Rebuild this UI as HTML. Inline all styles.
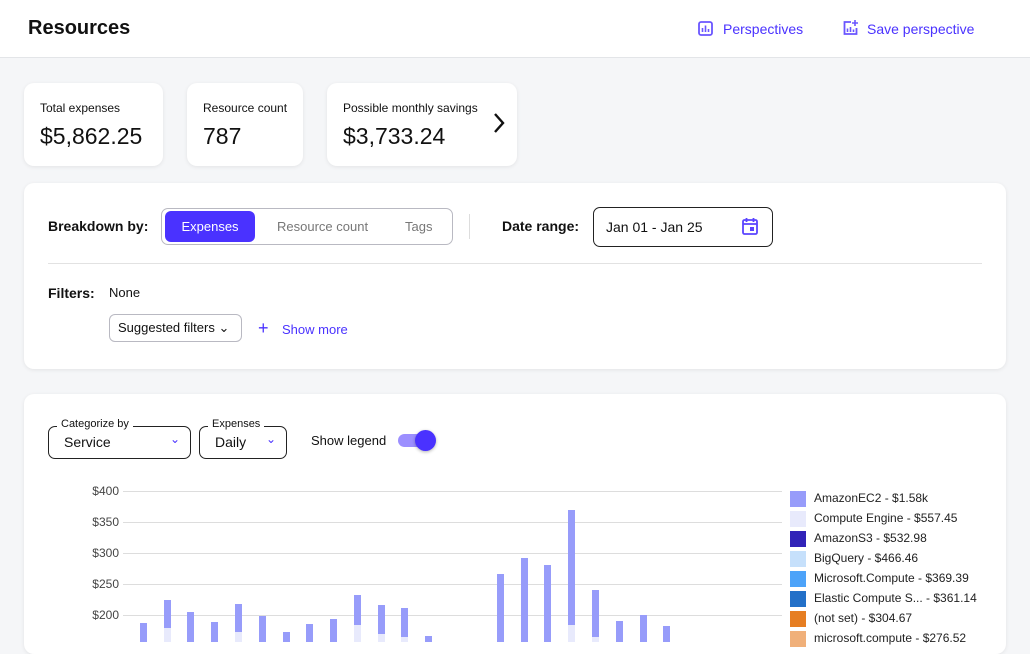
<!DOCTYPE html>
<html><head><meta charset="utf-8"><style>
*{box-sizing:border-box;margin:0;padding:0}
body{width:1030px;height:642px;overflow:hidden;background:#f5f6f8;font-family:"Liberation Sans",sans-serif;color:#111;position:relative}
.a{position:absolute}
.card{position:absolute;background:#fff;border-radius:10px;box-shadow:0 1px 4px rgba(0,0,0,.08)}
.p{color:#4a32ff}
.lg{position:absolute;left:790px;font-size:12px;color:#222}
.lg i{position:absolute;left:0;top:-7px;width:16px;height:16px}
.lg span{position:absolute;left:24px;top:-7px;white-space:nowrap}
</style></head><body>
<div class="a" style="left:0;top:0;width:1030px;height:58px;background:#fff;border-bottom:1px solid #e3e5e8"></div>
<div class="a" style="left:28px;top:17px;font-size:20px;font-weight:bold">Resources</div>
<svg class="a" style="left:698px;top:21px" width="15" height="15" viewBox="0 0 15 15"><rect x="1" y="1" width="13" height="13" rx="2" fill="none" stroke="#6a55ff" stroke-width="1.8"/><path d="M4.5 11V7M7.5 11V4.5M10.5 11V8" stroke="#6a55ff" stroke-width="1.6"/></svg>
<div class="a p" style="left:723px;top:21px;font-size:14px">Perspectives</div>
<svg class="a" style="left:842px;top:19px" width="17" height="17" viewBox="0 0 17 17"><path d="M9 3H2.5v12h12V9" fill="none" stroke="#6a55ff" stroke-width="1.8"/><path d="M5.5 13V9.5M8.5 13V8M11.5 13v-2.5M13 1v6M10 4h6" stroke="#6a55ff" stroke-width="1.6"/></svg>
<div class="a p" style="left:867px;top:21px;font-size:14px">Save perspective</div>

<div class="card" style="left:24px;top:83px;width:139px;height:83px"></div>
<div class="a" style="left:40px;top:101px;font-size:12px">Total expenses</div>
<div class="a" style="left:40px;top:123px;font-size:23px">$5,862.25</div>
<div class="card" style="left:187px;top:83px;width:116px;height:83px"></div>
<div class="a" style="left:203px;top:101px;font-size:12px">Resource count</div>
<div class="a" style="left:203px;top:123px;font-size:23px">787</div>
<div class="card" style="left:327px;top:83px;width:190px;height:83px"></div>
<div class="a" style="left:343px;top:101px;font-size:12px">Possible monthly savings</div>
<div class="a" style="left:343px;top:123px;font-size:23px">$3,733.24</div>
<svg class="a" style="left:492px;top:112px" width="14" height="22" viewBox="0 0 14 22"><path d="M3 2l8 9-8 9" fill="none" stroke="#111" stroke-width="2.4"/></svg>

<div class="card" style="left:24px;top:183px;width:982px;height:186px"></div>
<div class="a" style="left:48px;top:218px;font-size:14px;font-weight:bold">Breakdown by:</div>
<div class="a" style="left:161px;top:208px;width:292px;height:37px;border:1px solid #b9b9c2;border-radius:7px"></div>
<div class="a" style="left:165px;top:211px;width:90px;height:31px;background:#4a32ff;border-radius:6px;color:#fff;font-size:13px;text-align:center;line-height:31px">Expenses</div>
<div class="a" style="left:277px;top:219px;font-size:13px;color:#777">Resource count</div>
<div class="a" style="left:405px;top:219px;font-size:13px;color:#777">Tags</div>
<div class="a" style="left:469px;top:214px;width:1px;height:25px;background:#ddd"></div>
<div class="a" style="left:502px;top:218px;font-size:14px;font-weight:bold">Date range:</div>
<div class="a" style="left:593px;top:207px;width:180px;height:40px;border:1px solid #222;border-radius:7px"></div>
<div class="a" style="left:606px;top:219px;font-size:14px">Jan 01 - Jan 25</div>
<svg class="a" style="left:741px;top:217px" width="18" height="19" viewBox="0 0 18 19"><rect x="2" y="3" width="14" height="14" rx="1.5" fill="none" stroke="#5a44ff" stroke-width="1.8"/><path d="M2 7h14M5.5 1v4M12.5 1v4" stroke="#5a44ff" stroke-width="1.8"/><rect x="9" y="10" width="4" height="4" fill="#5a44ff"/></svg>
<div class="a" style="left:48px;top:263px;width:934px;height:1px;background:#e2e2e2"></div>
<div class="a" style="left:48px;top:285px;font-size:14px;font-weight:bold">Filters:</div>
<div class="a" style="left:109px;top:285px;font-size:13px">None</div>
<div class="a" style="left:109px;top:314px;width:133px;height:28px;border:1px solid #b9b9c2;border-radius:6px;font-size:13px;line-height:26px;padding-left:8px">Suggested filters ⌄</div>
<div class="a p" style="left:258px;top:319px;font-size:18px;line-height:18px">+</div>
<div class="a p" style="left:282px;top:322px;font-size:13px">Show more</div>

<div class="card" style="left:24px;top:394px;width:982px;height:260px"></div>
<div class="a" style="left:48px;top:426px;width:143px;height:33px;border:1px solid #222;border-radius:7px"></div>
<div class="a" style="left:57px;top:418px;background:#fff;padding:0 4px;font-size:11px">Categorize by</div>
<div class="a" style="left:64px;top:434px;font-size:14px">Service</div>
<div class="a p" style="left:170px;top:432px;font-size:12px">⌄</div>
<div class="a" style="left:199px;top:426px;width:88px;height:33px;border:1px solid #222;border-radius:7px"></div>
<div class="a" style="left:208px;top:418px;background:#fff;padding:0 4px;font-size:11px">Expenses</div>
<div class="a" style="left:215px;top:434px;font-size:14px">Daily</div>
<div class="a p" style="left:266px;top:432px;font-size:12px">⌄</div>
<div class="a" style="left:311px;top:433px;font-size:13px">Show legend</div>
<div class="a" style="left:398px;top:434px;width:34px;height:13px;border-radius:7px;background:#9c8fff"></div>
<div class="a" style="left:415px;top:430px;width:21px;height:21px;border-radius:50%;background:#4a32ff;box-shadow:0 1px 3px rgba(0,0,0,.3)"></div>

<svg class="a" style="left:0;top:470px" width="790" height="172">
<g font-size="12" fill="#444" font-family="Liberation Sans" text-anchor="end">
<text x="119" y="25">$400</text><text x="119" y="56">$350</text><text x="119" y="87">$300</text><text x="119" y="118">$250</text><text x="119" y="149">$200</text></g>
<g stroke="#ddd"><path d="M123 21.5H782M123 52.5H782M123 83.5H782M123 114.5H782M123 145.5H782"/></g>
<g fill="#979cfa">
<rect x="140" y="153" width="7" height="30"/><rect x="164" y="130" width="7" height="50"/><rect x="187" y="142" width="7" height="40"/><rect x="211" y="152" width="7" height="30"/><rect x="235" y="134" width="7" height="50"/><rect x="259" y="146" width="7" height="40"/><rect x="283" y="162" width="7" height="30"/><rect x="306" y="154" width="7" height="30"/><rect x="330" y="149" width="7" height="30"/><rect x="354" y="125" width="7" height="50"/><rect x="378" y="135" width="7" height="50"/><rect x="401" y="138" width="7" height="50"/><rect x="425" y="166" width="7" height="30"/>
<rect x="497" y="104" width="7" height="70"/><rect x="521" y="88" width="7" height="90"/><rect x="544" y="95" width="7" height="90"/><rect x="568" y="40" width="7" height="140"/><rect x="592" y="120" width="7" height="60"/><rect x="616" y="151" width="7" height="30"/><rect x="640" y="145" width="7" height="30"/><rect x="663" y="156" width="7" height="30"/></g>
<g fill="#e8eafc"><rect x="164" y="158" width="7" height="20"/><rect x="235" y="162" width="7" height="20"/><rect x="354" y="155" width="7" height="20"/><rect x="378" y="164" width="7" height="20"/><rect x="401" y="167" width="7" height="20"/><rect x="568" y="155" width="7" height="20"/><rect x="592" y="167" width="7" height="20"/></g>
</svg>

<div class="lg" style="top:498px"><i style="background:#979cfa"></i><span>AmazonEC2 - $1.58k</span></div>
<div class="lg" style="top:518px"><i style="background:#e8eafc"></i><span>Compute Engine - $557.45</span></div>
<div class="lg" style="top:538px"><i style="background:#3123b8"></i><span>AmazonS3 - $532.98</span></div>
<div class="lg" style="top:558px"><i style="background:#c6e0fb"></i><span>BigQuery - $466.46</span></div>
<div class="lg" style="top:578px"><i style="background:#4da3f9"></i><span>Microsoft.Compute - $369.39</span></div>
<div class="lg" style="top:598px"><i style="background:#2370c8"></i><span>Elastic Compute S... - $361.14</span></div>
<div class="lg" style="top:618px"><i style="background:#e67e22"></i><span>(not set) - $304.67</span></div>
<div class="lg" style="top:638px"><i style="background:#f0b07a"></i><span>microsoft.compute - $276.52</span></div>
</body></html>
